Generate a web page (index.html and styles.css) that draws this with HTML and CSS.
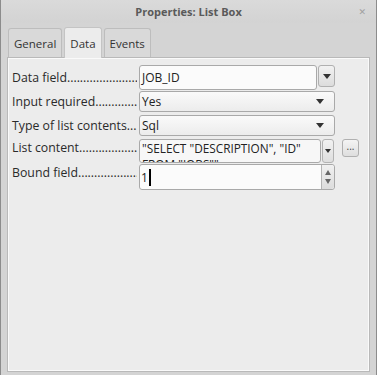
FILE: index.html
```html
<!DOCTYPE html>
<html>
<head>
<meta charset="utf-8">
<link rel="stylesheet" href="styles.css">
</head>
<body>
<div class="window">
  <div class="titlebar">
    <span class="title">Properties: List Box</span>
    <span class="close">✕</span>
  </div>
  <div class="body">
    <div class="tabs">
      <div class="tab">General</div>
      <div class="tab active">Data</div>
      <div class="tab">Events</div>
    </div>
    <div class="panel">
      <div class="row r1">
        <div class="label">Data field......................</div>
        <div class="field combo-sep">
          <div class="input">JOB_ID</div>
          <div class="dropbtn"><span class="arrow"></span></div>
        </div>
      </div>
      <div class="row r2">
        <div class="label">Input required..............</div>
        <div class="field combo">
          <div class="text">Yes</div>
          <span class="arrow"></span>
        </div>
      </div>
      <div class="row r3">
        <div class="label">Type of list contents.....</div>
        <div class="field combo">
          <div class="text">Sql</div>
          <span class="arrow"></span>
        </div>
      </div>
      <div class="row r4">
        <div class="label">List content..................</div>
        <div class="field area">
          <div class="areatext">"SELECT "DESCRIPTION", "ID"<br>FROM "JOBS""</div>
        </div>
        <div class="areabtn"><span class="arrow small"></span></div>
        <div class="dots">...</div>
      </div>
      <div class="row r5">
        <div class="label">Bound field.....................</div>
        <div class="field spin">
          <div class="input"><span class="caret">1</span></div>
          <div class="spinbtn"><span class="up"></span><span class="down"></span></div>
        </div>
      </div>
    </div>
  </div>
</div>
</body>
</html>
```
FILE: styles.css
```css
* { box-sizing: border-box; }
html, body { margin: 0; padding: 0; }
body {
  width: 377px;
  height: 375px;
  overflow: hidden;
  font-family: "Open Sans", "DejaVu Sans", sans-serif;
  font-size: 11.5px;
  color: #2e2e2e;
  background: #9c9c9c;
}
.window {
  width: 377px;
  height: 375px;
  display: flex;
  flex-direction: column;
  border-left: 1px solid #8c8c8c;
  border-right: 1px solid #8c8c8c;
  background: #d6d6d6;
}
.titlebar {
  height: 23px;
  position: relative;
  display: flex;
  align-items: center;
  justify-content: center;
  background: linear-gradient(#dadada, #d3d3d3);
}
.title {
  font-weight: bold;
  font-size: 11px;
  color: #5a5a5a;
}
.close {
  position: absolute;
  right: 10px;
  top: 5px;
  font-size: 9px;
  color: #a0a0a0;
  font-weight: bold;
}
.body {
  flex: 1;
  display: flex;
  flex-direction: column;
  padding: 3px 6px 3px 6px;
  background: #d4d4d4;
}
.tabs {
  display: flex;
  align-items: flex-end;
  gap: 2px;
  padding-left: 1px;
  height: 31px;
}
.tab {
  height: 29px;
  padding: 0 5px;
  display: flex;
  align-items: center;
  font-size: 11.5px;
  color: #333;
  border: 1px solid #bdbdbd;
  border-bottom: none;
  border-radius: 3px 3px 0 0;
  background: #d9d9d9;
}
.tab.active {
  height: 31px;
  background: #ececec;
  border-color: #c4c4c4;
  position: relative;
  top: 1px;
}
.panel {
  flex: 1;
  background: #ececec;
  border: 1px solid #b9b9b9;
  box-shadow: inset 1px 1px 0 #fafafa, inset -1px -1px 0 #fafafa;
  padding: 7px 0 0 3px;
  display: flex;
  flex-direction: column;
}
.row {
  display: flex;
  align-items: center;
}
.label {
  width: 126px;
  margin-right: 2px;
  font-size: 12.3px;
  color: #2a2a2a;
  white-space: nowrap;
  overflow: hidden;
  padding-left: 1px;
}
.field {
  border: 1px solid #a9a9a9;
  border-radius: 3px;
  background: #f8f8f8;
  display: flex;
  font-size: 12px;
  color: #222;
}
.r1 { height: 25px; }
.combo-sep {
  border: none;
  background: transparent;
  width: 196px;
  height: 25px;
  gap: 1px;
}
.combo-sep .input {
  width: 178px;
  height: 25px;
  border: 1px solid #a9a9a9;
  border-radius: 3px;
  background: #fbfbfb;
  padding: 3px 0 0 2px;
}
.dropbtn {
  width: 17px;
  height: 22px;
  border: 1px solid #b0b0b0;
  border-radius: 3px;
  background: linear-gradient(#f2f2f2, #dcdcdc);
  display: flex;
  align-items: center;
  justify-content: center;
}
.arrow {
  width: 0;
  height: 0;
  border-left: 4px solid transparent;
  border-right: 4px solid transparent;
  border-top: 5px solid #333;
}
.arrow.small {
  border-left-width: 3px;
  border-right-width: 3px;
  border-top-width: 4px;
}
.r2 { margin-top: 1px; height: 21px; }
.r3 { margin-top: 3px; height: 21px; }
.combo {
  width: 196px;
  height: 21px;
  background: linear-gradient(#fafafa, #ececec);
  align-items: center;
  justify-content: space-between;
  padding: 0 10px 0 2px;
}
.r4 { margin-top: 3px; height: 24px; align-items: flex-start; }
.area {
  width: 182px;
  height: 24px;
  background: #f7f7f7;
  overflow: hidden;
  padding-left: 2px;
}
.areatext {
  flex: 1;
  font-size: 11.8px;
  line-height: 16px;
  white-space: nowrap;
}
.areabtn {
  margin-left: 1px;
  width: 12px;
  height: 24px;
  border: 1px solid #b3b3b3;
  border-radius: 3px;
  background: linear-gradient(#f2f2f2, #dedede);
  display: flex;
  align-items: center;
  justify-content: center;
}
.dots {
  margin-left: 8px;
  width: 17px;
  height: 18px;
  border: 1px solid #b0b0b0;
  border-radius: 3px;
  background: linear-gradient(#f4f4f4, #dedede);
  font-size: 10px;
  line-height: 12px;
  text-align: center;
  color: #444;
}
.r5 { height: 26px; align-items: flex-start; margin-top: 1px; }
.spin {
  width: 196px;
  height: 26px;
  background: #fbfbfb;
}
.spin .input {
  flex: 1;
  padding: 4px 0 0 1px;
}
.caret {
  border-right: 2px solid #000;
  padding-right: 1px;
}
.spinbtn {
  width: 13px;
  border-left: 1px solid #b3b3b3;
  border-radius: 0 3px 3px 0;
  background: linear-gradient(#f0f0f0, #dcdcdc);
  display: flex;
  flex-direction: column;
  align-items: center;
  justify-content: center;
  gap: 4px;
}
.up {
  width: 0; height: 0;
  border-left: 3px solid transparent;
  border-right: 3px solid transparent;
  border-bottom: 5px solid #666;
}
.down {
  width: 0; height: 0;
  border-left: 3px solid transparent;
  border-right: 3px solid transparent;
  border-top: 5px solid #666;
}
```
